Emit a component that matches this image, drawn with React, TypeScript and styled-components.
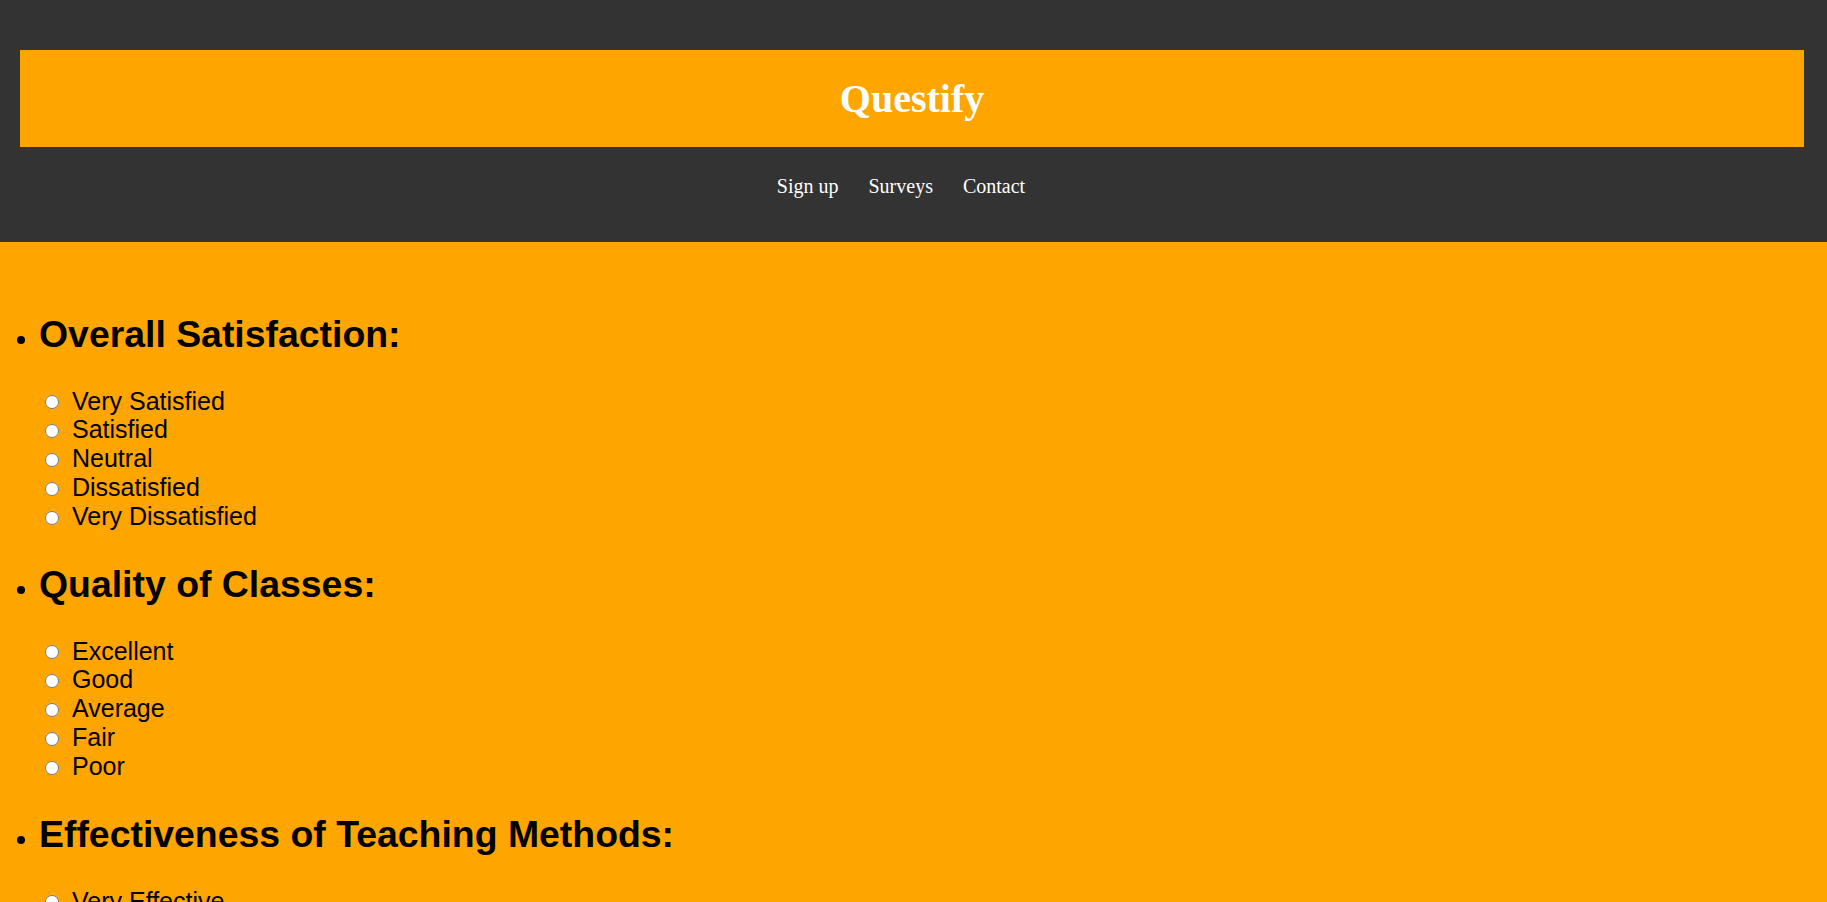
import { createGlobalStyle } from "styled-components";
import styled from "styled-components";

const GlobalStyle = createGlobalStyle`
  html, body {
    margin: 0;
    padding: 0;
    background: #ffa500;
  }
  body {
    font-family: "Liberation Sans", Arial, sans-serif;
  }
`;

const Header = styled.header`
  background: #333333;
  padding: 50px 0 0 0;
`;

const Banner = styled.div`
  background: #ffa500;
  margin: 0 23px 0 20px;
  padding: 25px 0 25px;
  text-align: center;
`;

const Title = styled.h1`
  margin: 0;
  font-family: "Liberation Serif", "Times New Roman", serif;
  font-size: 40px;
  font-weight: bold;
  color: #ffffff;
`;

const Nav = styled.nav`
  display: flex;
  justify-content: center;
  gap: 30px;
  padding: 28px 25px 44px 0;
`;

const NavLink = styled.a`
  font-family: "Liberation Serif", "Times New Roman", serif;
  font-size: 20px;
  color: #ffffff;
  text-decoration: none;
  cursor: pointer;
`;

const Main = styled.main`
  background: #ffa500;
  padding: 39px 0 40px;
`;

const QuestionList = styled.ul`
  margin: 0;
  padding: 0 0 0 39px;
  list-style: disc;
`;

const Question = styled.li`
  font-size: 25px;
  color: #000;
`;

const QuestionTitle = styled.h2`
  font-size: 37.4px;
  font-weight: bold;
  margin: 31.5px 0 31px;
`;

const OptionRow = styled.label`
  display: flex;
  align-items: center;
  font-size: 25px;
  line-height: 28.9px;
  color: #000;
`;

const Radio = styled.input`
  width: 14px;
  height: 14px;
  margin: 2px 13px 0 6px;
`;

const questions = [
  {
    title: "Overall Satisfaction:",
    name: "overall",
    options: ["Very Satisfied", "Satisfied", "Neutral", "Dissatisfied", "Very Dissatisfied"],
  },
  {
    title: "Quality of Classes:",
    name: "quality",
    options: ["Excellent", "Good", "Average", "Fair", "Poor"],
  },
  {
    title: "Effectiveness of Teaching Methods:",
    name: "effectiveness",
    options: ["Very Effective", "Effective", "Neutral", "Ineffective", "Very Ineffective"],
  },
];

export default function App() {
  return (
    <>
      <GlobalStyle />
      <Header>
        <Banner>
          <Title>Questify</Title>
        </Banner>
        <Nav>
          <NavLink>Sign up</NavLink>
          <NavLink>Surveys</NavLink>
          <NavLink>Contact</NavLink>
        </Nav>
      </Header>
      <Main>
        <QuestionList>
          {questions.map((q) => (
            <Question key={q.name}>
              <QuestionTitle>{q.title}</QuestionTitle>
              {q.options.map((opt) => (
                <OptionRow key={opt}>
                  <Radio type="radio" name={q.name} value={opt} />
                  {opt}
                </OptionRow>
              ))}
            </Question>
          ))}
        </QuestionList>
      </Main>
    </>
  );
}
